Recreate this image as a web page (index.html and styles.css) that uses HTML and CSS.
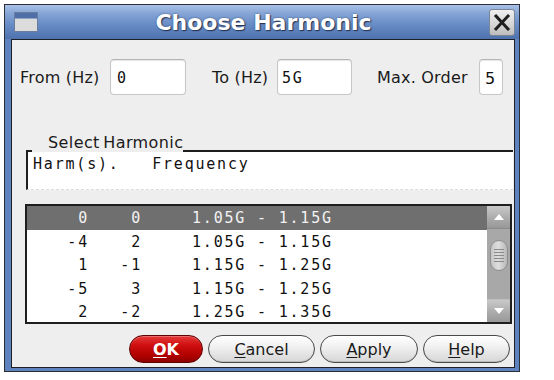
FILE: index.html
```html
<!DOCTYPE html>
<html>
<head>
<meta charset="utf-8">
<title>Choose Harmonic</title>
<link rel="stylesheet" href="styles.css">
</head>
<body>
<div class="window">
  <div class="titlebar">
    <svg class="app-icon" width="24" height="20" viewBox="0 0 24 20">
      <rect x="0.5" y="0.5" width="23" height="19" fill="#e2e2e2" stroke="#6a7d9e"/>
      <rect x="1" y="1" width="22" height="5" fill="#4f6fa6"/>
      <rect x="1" y="6" width="22" height="1" fill="#8fa3c4"/>
      <rect x="1" y="7" width="22" height="12" fill="#dcdcdc"/>
    </svg>
    <div class="title">Choose Harmonic</div>
    <div class="close-btn">
      <svg width="24" height="25" viewBox="0 0 24 25">
        <path d="M6 6 L18 19 M18 6 L6 19" stroke="#1e1e1e" stroke-width="3" stroke-linecap="square"/>
      </svg>
    </div>
  </div>
  <div class="frame-body">
    <div class="content">
      <div class="fields">
        <span class="lbl lbl-from">From (Hz)</span>
        <div class="input in-from">0</div>
        <span class="lbl lbl-to">To (Hz)</span>
        <div class="input in-to">5G</div>
        <span class="lbl lbl-max">Max. Order</span>
        <div class="input in-max">5</div>
      </div>

      <div class="group-head">
        <span class="corner"></span>
        <span class="group-title">Select Harmonic</span>
        <span class="rule"></span>
      </div>
      <div class="group-box">Harm(s).   Frequency</div>

      <div class="listbox">
        <div class="rows">
          <div class="row sel"><span class="c1">0</span><span class="c2">0</span><span class="c3">1.05G - 1.15G</span></div>
          <div class="row"><span class="c1">-4</span><span class="c2">2</span><span class="c3">1.05G - 1.15G</span></div>
          <div class="row"><span class="c1">1</span><span class="c2">-1</span><span class="c3">1.15G - 1.25G</span></div>
          <div class="row"><span class="c1">-5</span><span class="c2">3</span><span class="c3">1.15G - 1.25G</span></div>
          <div class="row"><span class="c1">2</span><span class="c2">-2</span><span class="c3">1.25G - 1.35G</span></div>
        </div>
        <div class="scrollbar">
          <div class="sb-btn">
            <svg width="12" height="8" viewBox="0 0 12 8"><polygon points="6,1 11,7 1,7" fill="#ffffff"/></svg>
          </div>
          <div class="sb-track">
            <div class="sb-thumb">
              <span class="grip"></span><span class="grip"></span><span class="grip"></span><span class="grip"></span><span class="grip"></span>
            </div>
          </div>
          <div class="sb-btn">
            <svg width="12" height="8" viewBox="0 0 12 8"><polygon points="1,1 11,1 6,7" fill="#ffffff"/></svg>
          </div>
        </div>
      </div>

      <div class="buttons">
        <div class="btn btn-ok"><u>O</u>K</div>
        <div class="btn btn-cancel"><u>C</u>ancel</div>
        <div class="btn btn-apply"><u>A</u>pply</div>
        <div class="btn btn-help"><u>H</u>elp</div>
      </div>
    </div>
  </div>
</div>
</body>
</html>
```
FILE: styles.css
```css
html, body {
  margin: 0;
  padding: 0;
  background: #ffffff;
}
body {
  padding: 4px 0 0 4px;
  font-family: "DejaVu Sans", sans-serif;
}

.window {
  width: 516px;
  height: 368px;
  box-sizing: border-box;
  border: 1px solid #2b2f38;
  background: #5d82bd;
  display: flex;
  flex-direction: column;
}

.titlebar {
  height: 34px;
  flex: none;
  display: flex;
  align-items: center;
  padding: 0 4px 0 9px;
  background: linear-gradient(to bottom, #a9c1e6 0px, #87a6d6 8px, #6b8fc8 18px, #5479b4 30px, #4f73ad 34px);
}
.app-icon {
  flex: none;
  display: block;
}
.title {
  flex: 1;
  text-align: center;
  color: #ffffff;
  font-family: "DejaVu Sans", sans-serif;
  font-weight: bold;
  font-size: 22px;
  line-height: 26px;
  padding-top: 1px;
  text-shadow: 1px 1px 1px #23324f, 0 0 2px #3a4f78;
}
.close-btn {
  flex: none;
  width: 26px;
  height: 27px;
  box-sizing: border-box;
  border: 1px solid #7c8596;
  border-radius: 3px;
  background: linear-gradient(to bottom, #f0f0f0, #d4d4d4 60%, #bdbdbd);
  display: flex;
  align-items: center;
  justify-content: center;
}
.close-btn svg {
  display: block;
}

.frame-body {
  flex: 1;
  display: flex;
  padding: 0 4px 3px 6px;
}

.content {
  flex: 1;
  box-sizing: border-box;
  border: 1px solid #1c1f26;
  background: #eeeeee;
  display: flex;
  flex-direction: column;
}

/* ---- top fields ---- */
.fields {
  display: flex;
  align-items: flex-start;
  height: 36px;
  margin-top: 19px;
  padding-left: 8px;
}
.lbl {
  flex: none;
  font-size: 16px;
  color: #1a1a1a;
  line-height: 36px;
  padding-top: 1px;
  white-space: nowrap;
  letter-spacing: 0.2px;
}
.lbl-from { width: 90px; }
.lbl-to { width: 65px; margin-left: 26px; }
.lbl-max { width: 102px; margin-left: 25px; }

.input {
  flex: none;
  height: 36px;
  box-sizing: border-box;
  border: 1px solid #c6c6c6;
  border-top-color: #b4b4b4;
  border-radius: 4px;
  background: #ffffff;
  box-shadow: inset 0 1px 1px rgba(0,0,0,0.10);
  font-family: "DejaVu Sans Mono", monospace;
  font-size: 15px;
  letter-spacing: 1.8px;
  color: #111;
  line-height: 33px;
  padding-top: 2px;
  overflow: hidden;
}
.in-from { width: 76px; padding-left: 6px; }
.in-to { width: 75px; padding-left: 4px; }
.in-max { width: 24px; padding-left: 5px; font-family: "DejaVu Sans", sans-serif; font-size: 16px; letter-spacing: 0; }

/* ---- group ---- */
.group-head {
  display: flex;
  align-items: flex-end;
  height: 20px;
  margin: 37px 1px 0 14px;
}
.corner {
  flex: none;
  width: 6px;
  height: 2px;
  background: #1e1e1e;
}
.group-title {
  flex: none;
  margin-left: 16px;
  font-size: 16px;
  line-height: 20px;
  padding-top: 1px;
  color: #1a1a1a;
  letter-spacing: 0.4px;
  word-spacing: -2px;
  align-self: flex-start;
}
.rule {
  flex: 1;
  height: 2px;
  background: #1e1e1e;
}
.group-box {
  margin: 0 1px 0 14px;
  height: 38px;
  box-sizing: border-box;
  background: #ffffff;
  border-left: 2px solid #1e1e1e;
  border-bottom: 1px dashed #dcdcdc;
  padding: 3px 0 0 5px;
  font-family: "DejaVu Sans Mono", monospace;
  font-size: 15px;
  letter-spacing: 1.8px;
  line-height: 18px;
  white-space: pre;
  color: #111;
}

/* ---- list ---- */
.listbox {
  margin: 14px 2px 0 13px;
  height: 120px;
  box-sizing: border-box;
  border: 2px solid #1e1e1e;
  background: #ffffff;
  display: flex;
  overflow: hidden;
}
.rows {
  flex: 1;
  display: flex;
  flex-direction: column;
}
.row {
  display: grid;
  grid-template-columns: 62px 53px 1fr;
  height: 23.5px;
  line-height: 25px;
  font-family: "DejaVu Sans Mono", monospace;
  font-size: 15px;
  letter-spacing: 1.8px;
  color: #111;
  white-space: pre;
}
.row.sel {
  background: #6f6f6f;
  color: #f2f2f2;
}
.c1, .c2 { text-align: right; }
.c3 { padding-left: 50px; }

.scrollbar {
  flex: none;
  width: 23px;
  display: flex;
  flex-direction: column;
  background: #a8a8a8;
}
.sb-btn {
  flex: none;
  height: 22px;
  display: flex;
  align-items: center;
  justify-content: center;
  background: linear-gradient(to bottom, #c9c9c9, #a9a9a9 60%, #989898);
  border-bottom: 1px solid #8a8a8a;
}
.sb-btn:last-child {
  border-bottom: none;
  border-top: 1px solid #bdbdbd;
}
.sb-btn svg { display: block; }
.sb-track {
  flex: 1;
  display: flex;
  justify-content: center;
  padding-top: 11px;
}
.sb-thumb {
  width: 18px;
  height: 31px;
  box-sizing: border-box;
  border-radius: 9px;
  border: 1px solid #8e8e8e;
  background: linear-gradient(to right, #c4c4c4, #dedede 45%, #b8b8b8);
  display: flex;
  flex-direction: column;
  align-items: center;
  justify-content: center;
  gap: 2px;
}
.grip {
  width: 10px;
  height: 1px;
  background: #8a8a8a;
}

/* ---- buttons ---- */
.buttons {
  display: flex;
  justify-content: flex-end;
  gap: 5px;
  margin-top: 11px;
  padding-right: 4px;
}
.btn {
  flex: none;
  height: 28px;
  box-sizing: border-box;
  border-radius: 14px;
  border: 1px solid #4a4a4a;
  background: linear-gradient(to bottom, #ffffff 0%, #f1f1f1 40%, #d6d6d6 100%);
  box-shadow: inset 0 -1px 0 #bdbdbd;
  font-size: 16px;
  line-height: 27px;
  color: #1a1a1a;
  text-align: center;
}
.btn u { text-decoration: underline; text-underline-offset: 2px; }
.btn-ok {
  width: 74px;
  border-color: #5c0000;
  background: linear-gradient(to bottom, #e43a3a 0%, #d01010 35%, #b00000 75%, #8e0000 100%);
  box-shadow: inset 0 1px 0 rgba(255,255,255,0.25);
  color: #ffffff;
  font-weight: bold;
}
.btn-cancel { width: 107px; }
.btn-apply { width: 98px; }
.btn-help { width: 87px; }
```
